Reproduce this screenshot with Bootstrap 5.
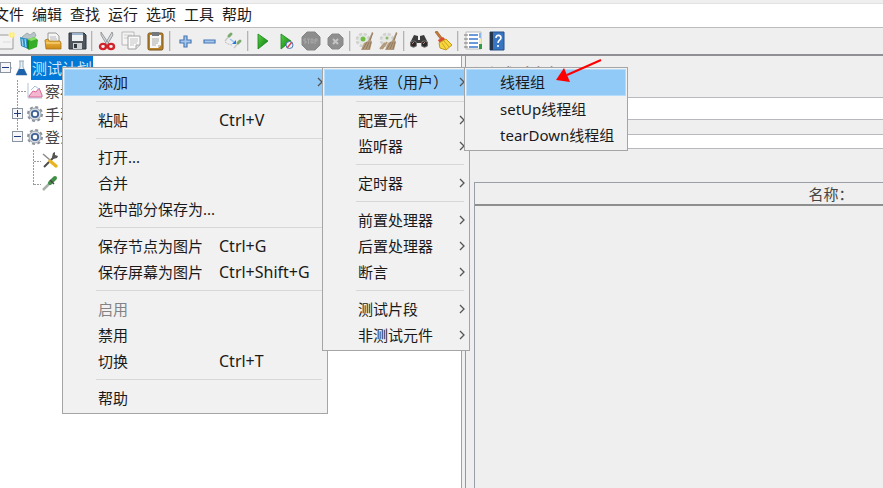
<!DOCTYPE html>
<html lang="zh-CN">
<head>
<meta charset="utf-8">
<meta name="viewport" content="width=device-width, initial-scale=1">
<title>测试计划</title>
<link href="https://cdn.jsdelivr.net/npm/bootstrap@5.3.0/dist/css/bootstrap.min.css" rel="stylesheet">
<style>
body{font-family:"Noto Sans","Noto Sans CJK SC",sans-serif;font-size:15px;line-height:24px;color:#1a1a1a;background:#efefef}
button{font:inherit;color:inherit;background:none;border:0;padding:0}
.app-menubar{background:#fff;border-top:1px solid #e2e2e2;margin-top:3px;padding-bottom:3px;line-height:20px;gap:8px}
.app-menubar button:first-child{margin-left:-6px}
.app-tools{background:#efefef;border-top:1px solid #bcbcbc;border-bottom:2px solid #8f8f94;height:29px;overflow:hidden}
.tool{width:24px;height:24px;display:flex;align-items:center;justify-content:center;flex:none}
.tool:first-child{margin-left:-7px}
.tool svg{width:20px;height:20px}
.tool-rule{width:2px;height:20px;margin:0 2px;background:#b4b4b4;border-right:1px solid #dcdcdc;flex:none}
.tree-pane{width:462px;background:#fff;border-right:1px solid #a0a0a8}
.tree-row{height:23px;color:#444;position:relative}
.tree-row:first-child{height:24px}
.tree-row button{padding:0 1px;white-space:nowrap}
.tree-row .chosen{background:#0078d7;color:#cfe5f8;height:24px;border:0}
.twig{width:11px;height:11px;border:1px solid #8a93a0;background:#f6f6f8;margin-right:4px;flex:none;display:block}
.twig path{stroke:#1f3d7a}
.guides{left:0;top:0;width:60px;height:140px;fill:none;stroke:#9a9a9a;stroke-dasharray:2 1}
.glyph{width:18px;height:18px;flex:none}
.lvl0 .twig{margin-right:2px}
.lvl1{padding-left:26px}.lvl1.twigged{padding-left:12px}.lvl1.twigged .twig{margin-right:3px}.lvl2{padding-left:41px}
.main-pane{border-left:1px solid #98989e;margin-left:3px;min-width:0;padding-left:8px}
.pane-title{font-size:20px;line-height:24px;margin:9px 0 8px;color:#333;font-weight:400}
.field-row{padding-left:90px}
.field-row input{border:1px solid #b9b9bd;border-right:0;background:#fff;border-radius:0;padding:0 4px;min-width:0}
.f-name{height:23px}.f-note{height:15px;margin-top:14px}
.grid-box{border:1px solid #9a9ea6;border-right:0;border-bottom:0;overflow:hidden;margin-top:33px}
.grid-box table{min-width:712px;width:100%;font-size:15px;color:#444}
.grid-box th{height:22px;padding:0;font-weight:400;line-height:20px;text-align:center;border-bottom:2px solid #8e8e8e}
.pop{background:#f1f1f1;border:1px solid #a5a5a5;padding:1px 1px 2px;top:67px;line-height:26px}
.pop button{display:flex;align-items:center;width:100%;height:26px;padding-left:34px;text-align:left;white-space:nowrap}
.pop .hot{background:#91c9f7;height:27px;border:1px solid #b5dbfa;padding:0 0 2px 33px;line-height:22px}
.pop hr{margin:5px 4px 5px 32px;border-top:1px solid #d7d7d7;opacity:1}
.pop-a{left:62px;width:266px}.pop-b{left:322px;width:148px}.pop-c{left:464px;width:164px}
.pop-a .cap{width:121px}
.pop .keys{font-size:16px}
.pop .tip{width:6px;height:10px;margin-left:auto;margin-right:3px;fill:none;stroke:#555;stroke-width:1.3}
.pop .hot .tip{margin-right:2px}
.pop button:disabled{color:#838383}
.pointer{left:552px;top:56px;width:54px;height:28px}
</style>
<script src="https://cdn.jsdelivr.net/npm/bootstrap@5.3.0/dist/js/bootstrap.bundle.min.js"></script>
</head>
<body class="d-flex flex-column vh-100 overflow-hidden position-relative">
<svg width="0" height="0" class="position-absolute" aria-hidden="true">
<defs>
<linearGradient id="gr" x1="0" x2="1" y2="1"><stop stop-color="#5bd04a"/><stop offset="1" stop-color="#067a08"/></linearGradient>
<linearGradient id="or" x1="0" y1="0" x2="0" y2="1"><stop stop-color="#f3bf45"/><stop offset="1" stop-color="#cc8a16"/></linearGradient>
<symbol id="gear" viewBox="0 0 18 18"><circle cx="9" cy="9" r="7" fill="none" stroke="#8b929b" stroke-width="2" stroke-dasharray="3 2.5"/><circle cx="9" cy="9" r="6" fill="#d9dde2" stroke="#9aa1aa"/><circle cx="9" cy="9" r="3.2" fill="#fff" stroke="#3f6296" stroke-width="1.8"/></symbol>
<symbol id="sweep" viewBox="0 0 20 20"><circle cx="8" cy="9" r="5" fill="#e6e8e6"/><circle cx="8" cy="9" r="6" fill="none" stroke="#cfd2cf" stroke-width="2.6" stroke-dasharray="3.2 1.5"/><path d="M18 1l-2 8 1 2-2 8H6l3-7 4-2 4-9z" fill="#b39a7c"/><path d="M8 18l4-7M11 18l3-7M14 18l2-7M15 9l3-7" stroke="#8a7355" stroke-width=".8"/></symbol>
</defs>
</svg>
<nav class="app-menubar d-flex" aria-label="主菜单">
<button>文件</button><button>编辑</button><button>查找</button><button>运行</button><button>选项</button><button>工具</button><button>帮助</button>
</nav>
<div class="app-tools d-flex align-items-center" role="toolbar" aria-label="工具栏">
<button class="tool" aria-label="新建"><svg viewBox="0 0 20 20"><path d="M1 4h17v14H1z" fill="#f3f3f3" stroke="#9b9b9b"/><path d="M8 11h8" stroke="#ddd"/><circle cx="17" cy="4" r="2.8" fill="#ffe96a"/><path d="M17 0v8M13 4h8" stroke="#fff6a8"/></svg></button>
<button class="tool" aria-label="模板"><svg viewBox="0 0 20 20"><path d="M3 6l5-4 3 2 4-3 2 3-2 4H4z" fill="#b8c6c9" stroke="#8a999b" stroke-width=".7"/><path d="M1 6l8 2v10l-7-3z" fill="#2f8fc4"/><path d="M3 8l1 7M6 8l1 8" stroke="#a9dcf2"/><path d="M8 9l7-3 4 3-1 7-8 3z" fill="#35ad29"/><path d="M8 9l2 1v9l-2-2z" fill="#168a17"/><path d="M9 8l6-2 3 2-6 2z" fill="#8bdc6a"/></svg></button>
<button class="tool" aria-label="打开"><svg viewBox="0 0 20 20"><path d="M5 2h8l3 3v8H5z" fill="#f5f5f5" stroke="#999"/><path d="M7 6h6M7 8h7" stroke="#b7b7b7"/><path d="M2 9l3-1 1 2h11l1 2v6H3z" fill="url(#or)" stroke="#a6741b" stroke-width=".8"/><path d="M3 12h14" stroke="#ffe093"/></svg></button>
<button class="tool" aria-label="保存"><svg viewBox="0 0 20 20"><path d="M2 2h15l2 2v14H2z" fill="#4e555d" stroke="#2f343a"/><path d="M5 2h11v8H5z" fill="#f0f2f4"/><path d="M5 2h11v2H5z" fill="#9cb4cb"/><path d="M6 12h9v6H6z" fill="#cbd0d4"/><path d="M7 13h3v4H7z" fill="#33383e"/></svg></button>
<span class="tool-rule"></span>
<button class="tool" aria-label="剪切"><svg viewBox="0 0 20 20"><path d="M4 1l8 12-2 1L4 4zM15 1L8 13l2 1 6-10z" fill="#d5d8da" stroke="#858a8e" stroke-width=".8"/><g fill="none" stroke="#d2232a" stroke-width="2.4"><ellipse cx="6" cy="15.500" rx="3" ry="2.600"/><ellipse cx="14" cy="15.500" rx="3" ry="2.600"/></g></svg></button>
<button class="tool" aria-label="复制"><svg viewBox="0 0 20 20"><path d="M1 1h12v13H1z" fill="#f5f5f5" stroke="#b8b8b8"/><path d="M3 4h8M3 7h4" stroke="#ccc"/><path d="M7 5h12v9l-4 4H7z" fill="#fafafa" stroke="#a2a2a2"/><path d="M9 8h8M9 10h8M9 12h7M9 14h4" stroke="#c4c4c4"/><path d="M15 18v-4h4" fill="#ddd" stroke="#aaa"/></svg></button>
<button class="tool" aria-label="粘贴"><svg viewBox="0 0 20 20"><rect x="3" y="2" width="15" height="17" rx="1.500" fill="#b9822a" stroke="#7c551b"/><path d="M5 4h11v10l-3 3H5z" fill="#f7f7f5"/><path d="M7 1h7v4H7z" fill="#73797c"/><path d="M7 8h7M7 10h7M7 12h6M7 14h4" stroke="#aaa"/><path d="M13 17v-3h3" fill="#ccc"/></svg></button>
<span class="tool-rule"></span>
<button class="tool" aria-label="展开"><svg viewBox="0 0 20 20"><path d="M9 5h3v4h4v3h-4v4H9v-4H5V9h4z" fill="#a5c7ee" stroke="#4679b5" stroke-width="1.200"/></svg></button>
<button class="tool" aria-label="收起"><svg viewBox="0 0 20 20"><path d="M5 9h11v3H5z" fill="#a5c7ee" stroke="#4679b5" stroke-width="1.200"/></svg></button>
<button class="tool" aria-label="切换"><svg viewBox="0 0 20 20"><path d="M2 10l5-6M11 17l5-6" stroke="#c9cdc9" stroke-width="1.600"/><path d="M6 5l2-2M15 12l2-2" stroke="#7bab6c" stroke-width="3" stroke-linecap="round"/><path d="M2 11l3 2 4 1" fill="none" stroke="#bbb" stroke-dasharray="2 1"/><path d="M7 8l4 3" stroke="#9cc4f5" stroke-width="1.500"/><path d="M9 13h4V9z" fill="#2477de"/></svg></button>
<span class="tool-rule"></span>
<button class="tool" aria-label="启动"><svg viewBox="0 0 20 20"><path d="M5 3l10 7-10 8z" fill="url(#gr)" stroke="#19831a" stroke-width=".8"/></svg></button>
<button class="tool" aria-label="不停顿启动"><svg viewBox="0 0 20 20"><path d="M4 3l10 7-10 8z" fill="url(#gr)" stroke="#19831a" stroke-width=".8"/><circle cx="12.500" cy="14" r="3.500" fill="#eef2fb" stroke="#4c75b8"/><path d="M10 17l5-6" stroke="#d54848" stroke-width="1.400"/></svg></button>
<button class="tool" aria-label="停止"><svg viewBox="0 0 20 20"><path d="M6 1h8l5 5v8l-5 5H6l-5-5V6z" fill="#8d8d8d" stroke="#858585"/><path d="M5 8H3v2h2v2H3M6 8h3M7.500 8v5M10 8h2v4h-2zM14 13V8h2v2h-2" fill="none" stroke="#a9a9a9"/></svg></button>
<button class="tool" aria-label="关闭"><svg viewBox="0 0 20 20"><path d="M7 3h7l4 4v7l-4 4H7l-4-4V7z" fill="#8f8f8f" stroke="#888"/><path d="M8 8l5 5M13 8l-5 5" stroke="#c4c4c4" stroke-width="2"/></svg></button>
<span class="tool-rule"></span>
<button class="tool" aria-label="清除"><svg><use href="#sweep"/><circle cx="8" cy="8" r="2.500" fill="#6fbf45"/></svg></button>
<button class="tool" aria-label="清除全部"><svg viewBox="0 0 20 20"><use href="#sweep" width="20" height="20"/><path d="M3 18l5-7M1 18l5-6" stroke="#b39a7c" stroke-width="2"/><circle cx="8" cy="7" r="1.500" fill="#8cb86e"/></svg></button>
<span class="tool-rule"></span>
<button class="tool" aria-label="查找"><svg viewBox="0 0 20 20"><path d="M5 4l4 1v4h2V5l4-1 4 8-1 4h-5l-1-4H8l-1 4H2l-1-4z" fill="#3c3c3c"/><circle cx="4.500" cy="13" r="3.200" fill="#282828" stroke="#777"/><circle cx="15.500" cy="13" r="3.200" fill="#282828" stroke="#777"/><path d="M3 13l2-2M14 13l2-2" stroke="#c88065"/></svg></button>
<button class="tool" aria-label="重置查找"><svg viewBox="0 0 20 20"><path d="M2 1l2-1 6 8-2 1z" fill="#c97934" stroke="#8b5524" stroke-width=".6"/><path d="M5 9l5-3 3 3-6 4z" fill="#da4b35"/><path d="M6 12l7-4 6 6-6 5-6-2z" fill="#f7d73b" stroke="#c1981c"/><path d="M9 12l4 6M11 10l5 6" stroke="#caa528"/></svg></button>
<span class="tool-rule"></span>
<button class="tool" aria-label="函数助手"><svg viewBox="0 0 20 20"><path d="M3 1h15v17H3z" fill="#fff" stroke="#bbb"/><path d="M6 4h9M6 8h9M6 12h9M6 16h9" stroke="#3e78cc" stroke-width="1.600"/><path d="M1 4h4M1 8h4M1 12h4M1 16h4" stroke="#777"/><path d="M16 2h2v5h-2z" fill="#8bb8ea"/><path d="M16 8h2v4h-2z" fill="#efeeb0"/><path d="M16 13h3v5h-3z" fill="#2f9d42"/></svg></button>
<button class="tool" aria-label="帮助"><svg viewBox="0 0 20 20"><path d="M3 1h14v18H3z" fill="#3976c2" stroke="#24508c"/><path d="M3 1h3v18H3z" fill="#24344a"/><path d="M9 7c0-4 5-3 5 0 0 2-3 2-3 5M11 14v2" stroke="#fff" stroke-width="1.600" fill="none"/></svg></button>
</div>
<div class="d-flex flex-grow-1 overflow-hidden">
<aside class="tree-pane flex-shrink-0 position-relative" aria-label="测试计划树">
<svg class="guides position-absolute" aria-hidden="true"><path d="M8 12h4M17.500 24v59M18 35.500h8M33.500 94v35M34 105.500h7M34 128.500h7"/></svg>
<div class="tree-row lvl0 d-flex align-items-center"><svg class="twig ms-n1" viewBox="0 0 9 9"><path d="M1 4.500h7"/></svg><svg class="glyph" viewBox="0 0 18 18"><path d="M6 2h5M7 2v6l-4 8h11L10 8V2" fill="#e7eff7" stroke="#9aabba"/><path d="M6 10h5l3 6H3z" fill="#1d62ad"/></svg><button class="chosen">测试计划</button></div>
<div class="tree-row lvl1 d-flex align-items-center"><svg class="glyph" viewBox="0 0 18 18"><path d="M2 1v15h14" fill="none" stroke="#b5c3d9"/><path d="M3 14l4-5 3 1 3-4 3 7v2H3z" fill="#f3b8cf" stroke="#d9699a"/><path d="M5 8l4-4 4 3" fill="none" stroke="#a9bfe6"/></svg><button>察看</button></div>
<div class="tree-row lvl1 twigged d-flex align-items-center"><svg class="twig" viewBox="0 0 9 9"><path d="M1 4.500h7M4.500 1v7"/></svg><svg class="glyph"><use href="#gear"/></svg><button>手动</button></div>
<div class="tree-row lvl1 twigged d-flex align-items-center"><svg class="twig" viewBox="0 0 9 9"><path d="M1 4.500h7"/></svg><svg class="glyph"><use href="#gear"/></svg><button>登录</button></div>
<div class="tree-row lvl2 d-flex align-items-center"><svg class="glyph" viewBox="0 0 18 18"><path d="M3 16L13 6" stroke="#4c4c4c" stroke-width="2"/><path d="M11 6l1-4 2-1v3l3 1-1 2-4 1z" fill="#555"/><path d="M2 3l7 6" stroke="#8a8a8a" stroke-width="1.500"/><path d="M9 10l6 5" stroke="#e8b424" stroke-width="3.500" stroke-linecap="round"/></svg></div>
<div class="tree-row lvl2 d-flex align-items-center"><svg class="glyph" viewBox="0 0 18 18"><path d="M2 16l8-8" stroke="#a9b0aa" stroke-width="2.500"/><path d="M9 9l5-5" stroke="#3f8f45" stroke-width="4" stroke-linecap="round"/><path d="M9 6l4 4" stroke="#444" stroke-width="1.500"/></svg></div>
</aside>
<main class="main-pane flex-grow-1 d-flex flex-column">
<h1 class="pane-title">测试计划</h1>
<div class="field-row d-flex flex-column"><input class="f-name" type="text" aria-label="名称"><input class="f-note" type="text" aria-label="注释"></div>
<div class="grid-box flex-grow-1"><table><thead><tr><th scope="col">名称：</th></tr></thead></table></div>
</main>
</div>
<div class="pop pop-a position-absolute" role="menu">
<button class="hot" role="menuitem">添加<svg class="tip" viewBox="0 0 6 10"><path d="M1 1l4 4-4 4"/></svg></button>
<hr>
<button role="menuitem"><span class="cap">粘贴</span><span class="keys">Ctrl+V</span></button>
<hr>
<button role="menuitem">打开...</button>
<button role="menuitem">合并</button>
<button role="menuitem">选中部分保存为...</button>
<hr>
<button role="menuitem"><span class="cap">保存节点为图片</span><span class="keys">Ctrl+G</span></button>
<button role="menuitem"><span class="cap">保存屏幕为图片</span><span class="keys">Ctrl+Shift+G</span></button>
<hr>
<button role="menuitem" disabled>启用</button>
<button role="menuitem">禁用</button>
<button role="menuitem"><span class="cap">切换</span><span class="keys">Ctrl+T</span></button>
<hr>
<button role="menuitem">帮助</button>
</div>
<div class="pop pop-b position-absolute" role="menu">
<button class="hot" role="menuitem">线程（用户）<svg class="tip" viewBox="0 0 6 10"><path d="M1 1l4 4-4 4"/></svg></button>
<hr>
<button role="menuitem">配置元件<svg class="tip" viewBox="0 0 6 10"><path d="M1 1l4 4-4 4"/></svg></button>
<button role="menuitem">监听器<svg class="tip" viewBox="0 0 6 10"><path d="M1 1l4 4-4 4"/></svg></button>
<hr>
<button role="menuitem">定时器<svg class="tip" viewBox="0 0 6 10"><path d="M1 1l4 4-4 4"/></svg></button>
<hr>
<button role="menuitem">前置处理器<svg class="tip" viewBox="0 0 6 10"><path d="M1 1l4 4-4 4"/></svg></button>
<button role="menuitem">后置处理器<svg class="tip" viewBox="0 0 6 10"><path d="M1 1l4 4-4 4"/></svg></button>
<button role="menuitem">断言<svg class="tip" viewBox="0 0 6 10"><path d="M1 1l4 4-4 4"/></svg></button>
<hr>
<button role="menuitem">测试片段<svg class="tip" viewBox="0 0 6 10"><path d="M1 1l4 4-4 4"/></svg></button>
<button role="menuitem">非测试元件<svg class="tip" viewBox="0 0 6 10"><path d="M1 1l4 4-4 4"/></svg></button>
</div>
<div class="pop pop-c position-absolute" role="menu">
<button class="hot" role="menuitem">线程组</button>
<button role="menuitem">setUp线程组</button>
<button role="menuitem">tearDown线程组</button>
</div>
<svg class="pointer position-absolute" viewBox="0 0 54 28" aria-hidden="true"><path d="M49 4L15 19" stroke="#f00" stroke-width="2"/><path d="M4 24l8-12 6 14z" fill="#f00"/></svg>
</body>
</html>
